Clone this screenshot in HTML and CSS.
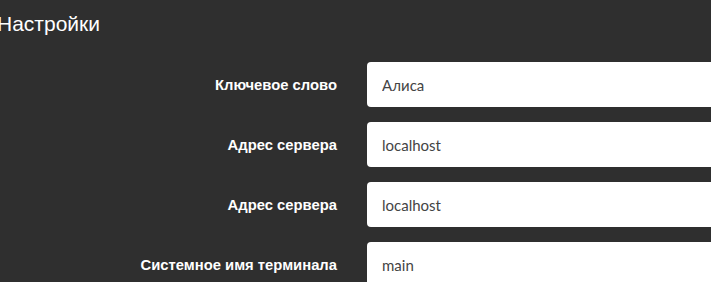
FILE: index.html
```html
<!DOCTYPE html>
<html lang="ru">
<head>
<meta charset="utf-8">
<title>Настройки</title>
<link rel="stylesheet" href="styles.css">
</head>
<body>
<div class="page">
  <h1 class="title">Настройки</h1>
  <form class="settings">
    <label class="label" for="f1">Ключевое слово</label>
    <input class="field" id="f1" type="text" value="Алиса">
    <label class="label" for="f2">Адрес сервера</label>
    <input class="field" id="f2" type="text" value="localhost">
    <label class="label" for="f3">Адрес сервера</label>
    <input class="field" id="f3" type="text" value="localhost">
    <label class="label" for="f4">Системное имя терминала</label>
    <input class="field" id="f4" type="text" value="main">
  </form>
</div>
</body>
</html>
```
FILE: styles.css
```css
html, body {
  margin: 0;
  padding: 0;
  background: #2f2f2f;
  overflow: hidden;
}
.page {
  width: 711px;
  height: 282px;
  overflow: hidden;
}
.title {
  margin: 0 0 0 -3px;
  padding-top: 10px;
  height: 52px;
  box-sizing: border-box;
  font-family: "Liberation Sans", Arial, sans-serif;
  font-weight: normal;
  font-size: 21px;
  line-height: 28px;
  color: #ffffff;
}
.settings {
  display: grid;
  grid-template-columns: 337px 420px;
  column-gap: 30px;
  row-gap: 15px;
  align-items: center;
  padding-top: 10px;
}
.label {
  text-align: right;
  font-family: "Liberation Sans", Arial, sans-serif;
  font-weight: bold;
  font-size: 14.8px;
  color: #ffffff;
}
.field {
  box-sizing: border-box;
  height: 45px;
  width: 420px;
  margin: 0;
  border: none;
  border-radius: 4px;
  background: #ffffff;
  padding: 0 15px;
  font-family: Lato, "Noto Sans", sans-serif;
  font-size: 15px;
  color: #444444;
  outline: none;
}
```
